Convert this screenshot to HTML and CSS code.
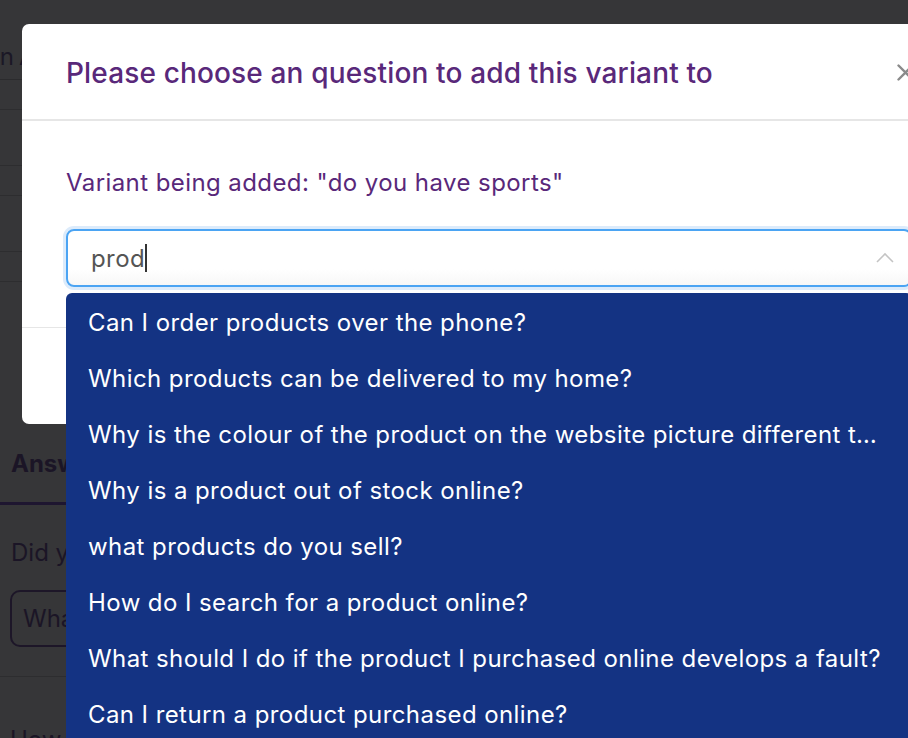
FILE: index.html
```html
<!DOCTYPE html>
<html>
<head>
<meta charset="utf-8">
<link rel="stylesheet" href="styles.css">
</head>
<body>
<div class="page">
  <div class="topbar"></div>
  <div class="table">
    <div class="thead"><span class="th1">Question</span><span class="th2">Answer</span></div>
    <div class="row"></div>
    <div class="row tall"></div>
    <div class="row"></div>
    <div class="row tall"></div>
    <div class="row"></div>
  </div>
  <div class="gap"></div>
  <div class="tabs"><span class="tab">Answers</span></div>
  <div class="section">
    <div class="did">Did you mean</div>
    <div class="box">What products do you sell?</div>
  </div>
  <div class="section2">How</div>
</div>

<div class="modal">
  <div class="modal-header">
    <h2 class="modal-title">Please choose an question to add this variant to</h2>
    <span class="close">
      <svg width="17" height="17" viewBox="0 0 17 17"><path d="M1.5 1.5 L15.5 15.5 M15.5 1.5 L1.5 15.5" stroke="#8a8a8a" stroke-width="2.4" fill="none" stroke-linecap="round"/></svg>
    </span>
  </div>
  <div class="modal-body">
    <p class="variant">Variant being added: "do you have sports"</p>
    <div class="select">
      <div class="control">
        <span class="value">prod</span><span class="caret"></span>
        <svg class="chev" width="18" height="12" viewBox="0 0 18 12"><path d="M1 10 L9 2 L17 10" stroke="#c4c4c4" stroke-width="1.6" fill="none"/></svg>
      </div>
      <ul class="menu">
        <li>Can I order products over the phone?</li>
        <li>Which products can be delivered to my home?</li>
        <li>Why is the colour of the product on the website picture different to the product I received?</li>
        <li>Why is a product out of stock online?</li>
        <li>what products do you sell?</li>
        <li>How do I search for a product online?</li>
        <li>What should I do if the product I purchased online develops a fault?</li>
        <li>Can I return a product purchased online?</li>
      </ul>
    </div>
  </div>
  <div class="modal-footer"></div>
</div>
</body>
</html>
```
FILE: styles.css
```css
* { box-sizing: border-box; }
html, body { margin: 0; padding: 0; }
body {
  width: 908px;
  height: 738px;
  overflow: hidden;
  background: #363638;
  font-family: Inter, "Noto Sans", sans-serif;
  position: relative;
}
.page { color: #1b1525; }
.topbar { height: 24px; background: #363638; }
.thead {
  height: 56px;
  font-size: 24px;
  border-bottom: 1px solid #2b2b2d;
  color: #1b1826;
  display: flex;
  align-items: center;
  padding-top: 10px;
  white-space: nowrap;
}
.th1 { margin-left: -200px; width: 214px; text-align: right; }
.th2 { padding-left: 5px; }
.row { height: 30px; border-bottom: 1px solid #2d2d2f; }
.row.tall { height: 56px; }
.gap { height: 142px; }
.tabs {
  height: 81px;
  border-bottom: 3px solid #1e1630;
  padding-left: 11px;
  display: flex;
  align-items: center;
}
.tab { font-size: 24px; font-weight: 700; color: #1b1526; }
.section { padding: 33px 0 29px 10px; border-bottom: 1px solid #2d2d2f; }
.did { font-size: 24px; line-height: 29px; color: #1b1526; margin-bottom: 23px; padding-left: 1px; white-space: nowrap; }
.box {
  height: 57px;
  width: 360px;
  border: 2px solid #1d1628;
  border-radius: 10px;
  font-size: 24px;
  line-height: 53px;
  padding-left: 11px;
  color: #1b1526;
  white-space: nowrap;
  overflow: hidden;
}
.section2 { padding: 48px 0 0 10px; font-size: 24px; }

.modal {
  position: absolute;
  left: 22px;
  top: 24px;
  width: 934px;
  height: 400px;
  background: #fff;
  border-radius: 7px;
}
.modal-header {
  height: 97px;
  border-bottom: 2px solid #e6e6e6;
  display: flex;
  align-items: center;
  justify-content: space-between;
  padding: 0 42px 0 44px;
}
.modal-title {
  margin: 0;
  font-size: 28px;
  font-weight: 500;
  color: #59287a;
  line-height: 34px;
  margin-top: 2px;
  letter-spacing: 0.15px;
  white-space: nowrap;
}
.close { display: flex; margin-top: 2px; }
.modal-body {
  padding: 49px 44px 0 44px;
  height: 207px;
  border-bottom: 1px solid #e6e6e6;
}
.variant {
  margin: 0 0 33px 0;
  font-size: 24px;
  letter-spacing: 0.42px;
  color: #59287a;
  line-height: 26px;
}
.select { position: relative; }
.control {
  height: 58px;
  border: 2px solid #4ba4f3;
  border-radius: 8px;
  box-shadow: 0 0 0 3px #dcebfb;
  display: flex;
  align-items: center;
  padding-left: 23px;
  font-size: 24px;
  letter-spacing: 0.4px;
  color: #555;
  position: relative;
  background: linear-gradient(#fff 70%, #f7f7f7);
}
.caret {
  display: inline-block;
  width: 1.5px;
  height: 28px;
  background: #333;
  margin-left: 0;
}
.chev { position: absolute; right: 16px; top: 21px; }
.menu {
  position: absolute;
  left: 0;
  right: 0;
  top: 64px;
  margin: 0;
  padding: 2px 0 0 0;
  list-style: none;
  background: #143383;
  border-radius: 6px 6px 0 0;
  z-index: 5;
}
.menu li {
  height: 56px;
  line-height: 56px;
  padding: 0 28px 0 22px;
  color: #fff;
  font-size: 24px;
  letter-spacing: 0.42px;
  white-space: nowrap;
  overflow: hidden;
  text-overflow: ellipsis;
}
.modal-footer { height: 94px; }
```
